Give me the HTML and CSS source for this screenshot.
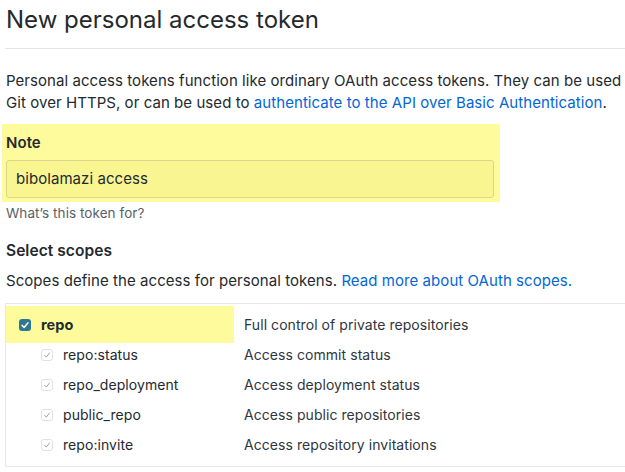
FILE: index.html
```html
<!DOCTYPE html>
<html>
<head>
<meta charset="utf-8">
<link rel="stylesheet" href="styles.css">
</head>
<body>
<div class="page">
  <div class="header"><h1>New personal access token</h1></div>
  <p class="intro">Personal access tokens function like ordinary OAuth access tokens. They can be used<br>Git over HTTPS, or can be used to <a href="#">authenticate to the API over Basic Authentication</a>.</p>
  <div class="note-box">
    <label class="note-label">Note</label>
    <div class="note-input">bibolamazi access</div>
  </div>
  <p class="hint">What’s this token for?</p>
  <h3 class="scopes-title">Select scopes</h3>
  <p class="scopes-desc">Scopes define the access for personal tokens. <a href="#">Read more about OAuth scopes.</a></p>
  <div class="scopes">
    <div class="row main">
      <div class="name hl">
        <span class="cb checked"><svg viewBox="0 0 12 12" width="12" height="12"><path d="M3 6.3 L5.1 8.4 L9 3.8" fill="none" stroke="#fffbe0" stroke-width="1.5" stroke-linecap="round" stroke-linejoin="round"/></svg></span>
        <b>repo</b>
      </div>
      <div class="desc">Full control of private repositories</div>
    </div>
    <div class="row sub">
      <div class="name"><span class="cb dis"><svg viewBox="0 0 12 12" width="12" height="12"><path d="M3.6 6.3 L5.3 8.1 L8.5 4" fill="none" stroke="#a0a4a8" stroke-width="1" stroke-linecap="round" stroke-linejoin="round"/></svg></span>repo:status</div>
      <div class="desc">Access commit status</div>
    </div>
    <div class="row sub">
      <div class="name"><span class="cb dis"><svg viewBox="0 0 12 12" width="12" height="12"><path d="M3.6 6.3 L5.3 8.1 L8.5 4" fill="none" stroke="#a0a4a8" stroke-width="1" stroke-linecap="round" stroke-linejoin="round"/></svg></span>repo_deployment</div>
      <div class="desc">Access deployment status</div>
    </div>
    <div class="row sub">
      <div class="name"><span class="cb dis"><svg viewBox="0 0 12 12" width="12" height="12"><path d="M3.6 6.3 L5.3 8.1 L8.5 4" fill="none" stroke="#a0a4a8" stroke-width="1" stroke-linecap="round" stroke-linejoin="round"/></svg></span>public_repo</div>
      <div class="desc">Access public repositories</div>
    </div>
    <div class="row sub">
      <div class="name"><span class="cb dis"><svg viewBox="0 0 12 12" width="12" height="12"><path d="M3.6 6.3 L5.3 8.1 L8.5 4" fill="none" stroke="#a0a4a8" stroke-width="1" stroke-linecap="round" stroke-linejoin="round"/></svg></span>repo:invite</div>
      <div class="desc">Access repository invitations</div>
    </div>
  </div>
</div>
</body>
</html>
```

FILE: styles.css
```css
html, body {
  margin: 0;
  padding: 0;
  background: #fff;
}
body {
  font-family: Inter, "Liberation Sans", Arial, sans-serif;
  color: #24292e;
  font-size: 15px;
  letter-spacing: 0.06px;
  overflow: hidden;
}
.page {
  padding-left: 6px;
}
.header {
  margin-left: -1px;
  padding-left: 1px;
  height: 49px;
  border-bottom: 1px solid #e1e4e8;
  box-sizing: border-box;
}
h1 {
  margin: 0;
  padding-top: 4px;
  font-size: 24px;
  font-weight: 400;
  line-height: 32px;
  letter-spacing: 0;
  white-space: nowrap;
}
.intro {
  margin: 21px 0 0;
  line-height: 22px;
  white-space: nowrap;
}
a {
  color: #0366d6;
  text-decoration: none;
}
.note-box {
  margin: 10px 0 0 -4px;
  width: 498px;
  box-sizing: border-box;
  background: #fefb9c;
  padding: 8px 6px 4px 4px;
}
.note-label {
  display: block;
  font-weight: 600;
  line-height: 22px;
  margin-bottom: 6px;
}
.note-input {
  height: 38px;
  box-sizing: border-box;
  border: 1px solid #dbd68c;
  border-radius: 3px;
  background: #f9f692;
  padding: 0 9px;
  line-height: 36px;
  font-size: 15px;
}
.hint {
  margin: 2px 0 0;
  font-size: 13.5px;
  line-height: 18px;
  color: #586069;
}
.scopes-title {
  margin: 18px 0 0;
  font-size: 15.5px;
  font-weight: 600;
  line-height: 22px;
}
.scopes-desc {
  margin: 8px 0 0;
  line-height: 22px;
  white-space: nowrap;
}
.scopes {
  margin: 11px 0 0 -1px;
  border: 1px solid #e6e8eb;
  border-right: none;
  padding: 2px 0 3px 0;
  font-size: 14px;
}
.row {
  display: flex;
  white-space: nowrap;
}
.row .name {
  width: 228px;
  display: flex;
  align-items: center;
  box-sizing: border-box;
}
.row .desc {
  padding-left: 10px;
  color: #2f363d;
}
.row.main {
  height: 37px;
  align-items: center;
}
.row.main .name {
  height: 37px;
  padding-left: 13px;
  background: #fefb9c;
}
.row.main .name b {
  margin-left: 10px;
  font-weight: 700;
  font-size: 14.5px;
}
.row.sub {
  height: 30px;
  align-items: flex-start;
  padding-top: 3px;
  box-sizing: border-box;
  line-height: 18px;
}
.row.sub .name {
  padding-left: 35px;
  height: 18px;
}
.cb {
  width: 12px;
  height: 12px;
  box-sizing: border-box;
  border-radius: 3px;
  display: inline-flex;
  flex: none;
}
.cb svg {
  display: block;
}
.cb.checked {
  background: #2e7695;
  margin-top: 1px;
}
.cb.dis {
  border: 1px solid #dfe1e4;
  background: #fff;
  margin-right: 10px;
}
.cb.dis svg {
  margin: -1px;
}
```
